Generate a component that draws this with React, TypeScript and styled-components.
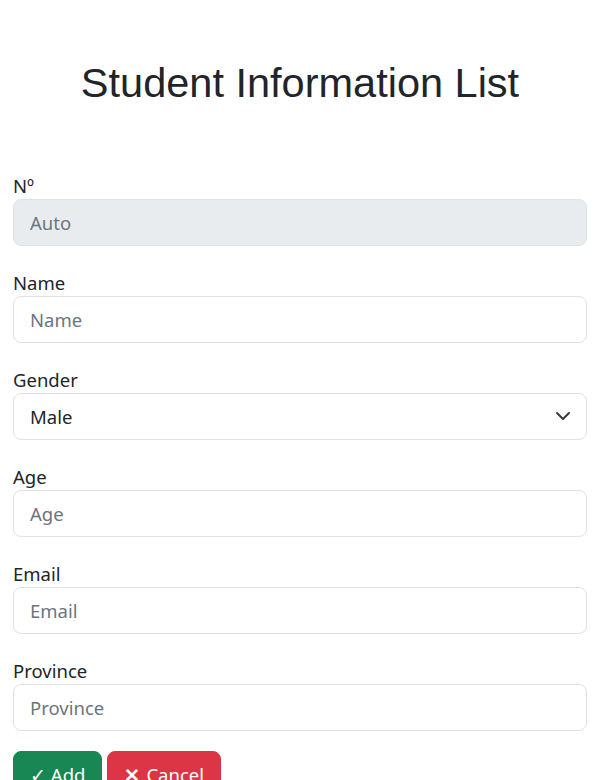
import React from "react";
import styled, { createGlobalStyle } from "styled-components";

const Global = createGlobalStyle`
  * { box-sizing: border-box; }
  body {
    margin: 0;
    background: #ffffff;
    color: #212529;
    font-family: "Noto Sans", "Open Sans", sans-serif;
    font-size: 18.5px;
    line-height: 1.5;
  }
`;

const Page = styled.div`
  padding: 0 11px 0 13px;
`;

const Title = styled.h1`
  margin: 0;
  padding: 58px 0 64px;
  text-align: center;
  font-family: "Liberation Sans", Arial, sans-serif;
  font-weight: 400;
  font-size: 41.5px;
  line-height: 50px;
  color: #212529;
`;

const Form = styled.form`
  display: flex;
  flex-direction: column;
  gap: 23px;
`;

const Field = styled.div`
  display: flex;
  flex-direction: column;
`;

const Label = styled.label`
  display: block;
  font-size: 18.5px;
  line-height: 27px;
  color: #212529;
`;

const Input = styled.input`
  display: block;
  width: 100%;
  height: 47px;
  padding: 9px 16px;
  font-family: inherit;
  font-size: 18.5px;
  line-height: 27px;
  color: #212529;
  background: ${(p) => (p.disabled ? "#e9ecef" : "#ffffff")};
  border: 1px solid #dee2e6;
  border-radius: 8px;
  outline: none;
  &::placeholder {
    color: #6c757d;
    opacity: 1;
  }
`;

const SelectWrap = styled.div`
  position: relative;
`;

const Select = styled.select`
  display: block;
  width: 100%;
  height: 47px;
  padding: 9px 48px 9px 16px;
  font-family: inherit;
  font-size: 18.5px;
  line-height: 27px;
  color: #212529;
  background: #ffffff;
  border: 1px solid #dee2e6;
  border-radius: 8px;
  appearance: none;
  outline: none;
`;

const Chevron = styled.svg`
  position: absolute;
  right: 16px;
  top: 15px;
  width: 16px;
  height: 16px;
  pointer-events: none;
`;

const Actions = styled.div`
  display: flex;
  gap: 5px;
  margin-top: -3px;
`;

const Button = styled.button<{ $variant: "success" | "danger" }>`
  height: 47px;
  padding: 9px 16px;
  font-family: inherit;
  font-size: 18.5px;
  line-height: 27px;
  color: #ffffff;
  border: 1px solid ${(p) => (p.$variant === "success" ? "#198754" : "#dc3545")};
  background: ${(p) => (p.$variant === "success" ? "#198754" : "#dc3545")};
  border-radius: 8px;
  cursor: pointer;
`;

const Mark = styled.span`
  font-weight: 700;
  margin-right: 6px;
`;

export default function App() {
  return (
    <>
      <Global />
      <Page>
        <Title>Student Information List</Title>
        <Form onSubmit={(e) => e.preventDefault()}>
          <Field>
            <Label>Nº</Label>
            <Input placeholder="Auto" disabled />
          </Field>
          <Field>
            <Label>Name</Label>
            <Input placeholder="Name" />
          </Field>
          <Field>
            <Label>Gender</Label>
            <SelectWrap>
              <Select defaultValue="Male">
                <option>Male</option>
                <option>Female</option>
              </Select>
              <Chevron viewBox="0 0 16 16">
                <path
                  fill="none"
                  stroke="#343a40"
                  strokeLinecap="round"
                  strokeLinejoin="round"
                  strokeWidth="2"
                  d="m2 5 6 6 6-6"
                />
              </Chevron>
            </SelectWrap>
          </Field>
          <Field>
            <Label>Age</Label>
            <Input placeholder="Age" />
          </Field>
          <Field>
            <Label>Email</Label>
            <Input placeholder="Email" />
          </Field>
          <Field>
            <Label>Province</Label>
            <Input placeholder="Province" />
          </Field>
          <Actions>
            <Button $variant="success" type="submit">✓ Add</Button>
            <Button $variant="danger" type="button"><Mark>✕</Mark>Cancel</Button>
          </Actions>
        </Form>
      </Page>
    </>
  );
}
